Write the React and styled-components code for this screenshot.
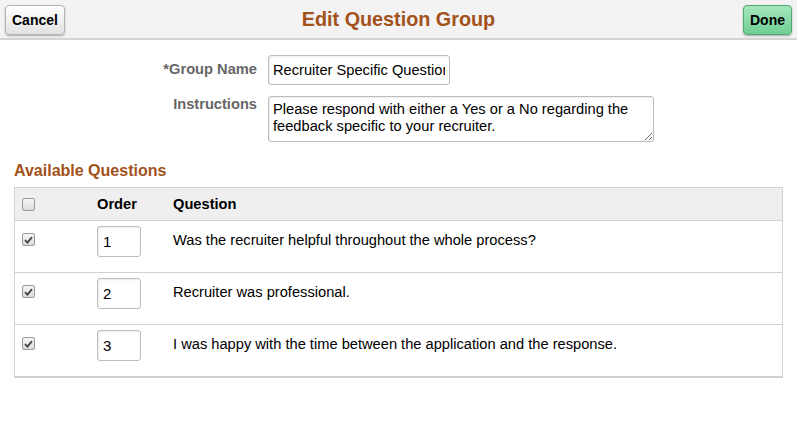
import React from 'react';
import styled, { createGlobalStyle } from 'styled-components';

const GlobalStyle = createGlobalStyle`
  body {
    margin: 0;
    background: #fff;
    font-family: "Liberation Sans", Arial, sans-serif;
    font-size: 14.67px;
    color: #000;
  }
`;

const Page = styled.div`
  width: 797px;
  height: 429px;
  background: #fff;
`;

const Header = styled.div`
  height: 38px;
  background: #f3f3f3;
  border-bottom: 2px solid #d4d4d4;
  display: flex;
  align-items: center;
  justify-content: space-between;
  padding: 0 5px;
  position: relative;
`;

const Button = styled.button`
  height: 30px;
  padding: 0 6px;
  font-family: "Liberation Sans", Arial, sans-serif;
  font-size: 14px;
  font-weight: bold;
  color: #000;
  border-radius: 4px;
  border: 1px solid ${(p) => (p.$primary ? '#52a872' : '#b5b5b5')};
  background: ${(p) =>
    p.$primary
      ? 'linear-gradient(#a6e6bd, #6fcf93)'
      : 'linear-gradient(#ffffff, #e2e2e2)'};
  box-shadow: 0 1px 2px rgba(0, 0, 0, 0.3);
  margin-top: 1px;
`;

const Title = styled.h1`
  position: absolute;
  left: 0;
  right: 0;
  top: 0;
  margin: 0;
  line-height: 38px;
  text-align: center;
  font-size: 19.8px;
  font-weight: bold;
  color: #a2521a;
  pointer-events: none;
`;

const Form = styled.div`
  display: grid;
  grid-template-columns: 257px auto;
  column-gap: 11px;
  row-gap: 11px;
  padding-top: 15px;
  align-items: start;
`;

const Label = styled.label`
  text-align: right;
  font-weight: bold;
  color: #666;
  font-size: 14.67px;
  padding-top: ${(p) => p.$top ?? 6}px;
`;

const TextInput = styled.input`
  box-sizing: border-box;
  width: 182px;
  height: 30px;
  border: 1px solid #bdbdbd;
  border-radius: 3px;
  padding: 0 4px;
  font-family: "Liberation Sans", Arial, sans-serif;
  font-size: 14.67px;
  color: #000;
  box-shadow: inset 1px 1px 2px rgba(0, 0, 0, 0.08);
`;

const TextArea = styled.textarea`
  box-sizing: border-box;
  width: 386px;
  height: 46px;
  border: 1px solid #bdbdbd;
  border-radius: 3px;
  padding: 4px 4px;
  font-family: "Liberation Sans", Arial, sans-serif;
  font-size: 14.67px;
  line-height: 17px;
  color: #000;
  resize: both;
  display: block;
  box-shadow: inset 1px 1px 2px rgba(0, 0, 0, 0.08);
`;

const Section = styled.div`
  padding: 0 14px;
`;

const SectionTitle = styled.h2`
  margin: 20px 0 7px;
  font-size: 16px;
  font-weight: bold;
  color: #a2521a;
`;

const Table = styled.div`
  width: 767px;
  border: 1px solid #d2d2d2;
  border-bottom: 2px solid #d2d2d2;
`;

const Row = styled.div`
  display: grid;
  grid-template-columns: 82px 76px 1fr;
  height: ${(p) => (p.$head ? 32 : 51)}px;
  background: ${(p) => (p.$head ? '#efefef' : '#fff')};
  border-top: ${(p) => (p.$first ? 'none' : '1px solid #d2d2d2')};
  align-items: ${(p) => (p.$head ? 'center' : 'start')};
  font-weight: ${(p) => (p.$head ? 'bold' : 'normal')};
`;

const Cell = styled.div`
  padding-left: ${(p) => p.$pl || 0}px;
  padding-top: ${(p) => p.$pt || 0}px;
  display: flex;
  align-items: center;
`;

const Check = styled.span`
  box-sizing: border-box;
  width: 13px;
  height: 13px;
  border: 1px solid #9a9a9a;
  border-radius: 2px;
  background: linear-gradient(#f6f6f6, #dcdcdc);
  display: inline-flex;
  align-items: center;
  justify-content: center;
`;

const OrderInput = styled.input`
  box-sizing: border-box;
  width: 44px;
  height: 31px;
  border: 1px solid #bdbdbd;
  border-radius: 3px;
  padding: 0 5px;
  font-family: "Liberation Sans", Arial, sans-serif;
  font-size: 15px;
  color: #000;
  box-shadow: inset 1px 1px 2px rgba(0, 0, 0, 0.08);
`;

const Tick = () => (
  <svg width="9" height="8" viewBox="0 0 9 8">
    <path d="M1 4.2 L3.4 6.6 L8 1.2" fill="none" stroke="#444" strokeWidth="1.8" />
  </svg>
);

const questions = [
  'Was the recruiter helpful throughout the whole process?',
  'Recruiter was professional.',
  'I was happy with the time between the application and the response.',
];

export default function App() {
  return (
    <Page>
      <GlobalStyle />
      <Header>
        <Button>Cancel</Button>
        <Title>Edit Question Group</Title>
        <Button $primary>Done</Button>
      </Header>

      <Form>
        <Label>*Group Name</Label>
        <TextInput readOnly value="Recruiter Specific Questions" />
        <Label $top={0}>Instructions</Label>
        <TextArea
          readOnly
          value="Please respond with either a Yes or a No regarding the feedback specific to your recruiter."
        />
      </Form>

      <Section>
        <SectionTitle>Available Questions</SectionTitle>
        <Table>
          <Row $head $first>
            <Cell $pl={7}><Check /></Cell>
            <Cell>Order</Cell>
            <Cell>Question</Cell>
          </Row>
          {questions.map((q, i) => (
            <Row key={i}>
              <Cell $pl={7} $pt={12}><Check><Tick /></Check></Cell>
              <Cell $pt={5}><OrderInput readOnly value={i + 1} /></Cell>
              <Cell $pt={11}>{q}</Cell>
            </Row>
          ))}
        </Table>
      </Section>
    </Page>
  );
}
